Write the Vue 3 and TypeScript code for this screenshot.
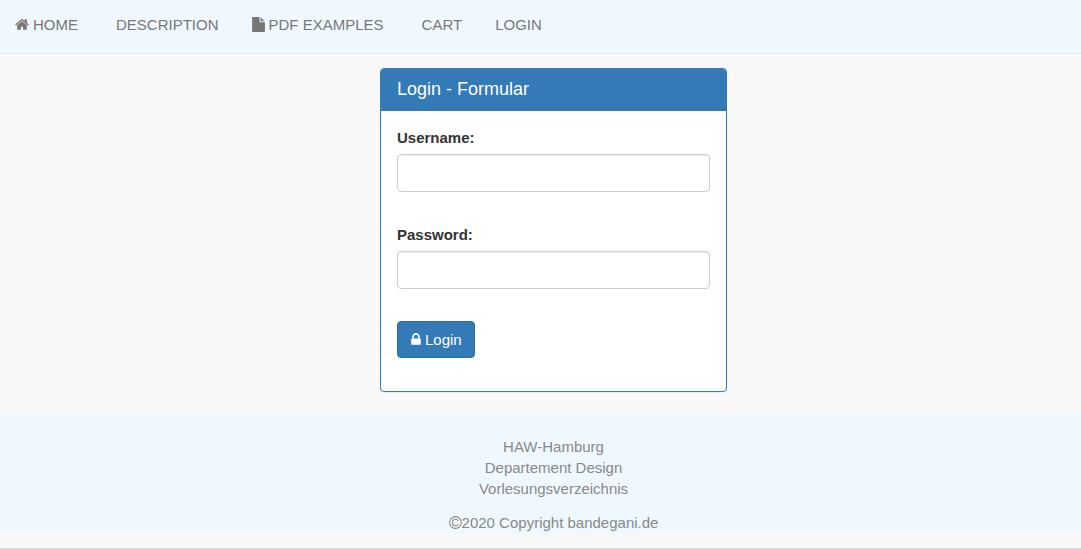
<script setup lang="ts">
import { ref } from 'vue'

interface NavItem {
  label: string
  icon?: 'home' | 'file'
}

const navItems: NavItem[] = [
  { label: 'HOME', icon: 'home' },
  { label: 'DESCRIPTION' },
  { label: 'PDF EXAMPLES', icon: 'file' },
  { label: 'CART' },
  { label: 'LOGIN' },
]

const footerLines: string[] = ['HAW-Hamburg', 'Departement Design', 'Vorlesungsverzeichnis']

const username = ref('')
const password = ref('')
</script>

<template>
  <div class="page">
    <nav class="navbar">
      <a v-for="item in navItems" :key="item.label" href="#" class="nav-link" :class="{ 'with-icon': item.icon }">
        <svg v-if="item.icon === 'home'" class="icon icon-home" viewBox="64 0 1664 1792" aria-hidden="true">
          <path d="M1472 992v480q0 26-19 45t-45 19h-384v-384h-256v384h-384q-26 0-45-19t-19-45v-480q0-1 .5-3t.5-3l575-474 575 474q1 2 1 6zm223-69l-62 74q-8 9-21 11h-3q-13 0-21-7l-692-577-692 577q-12 8-24 7-13-2-21-11l-62-74q-8-10-7-23.5t11-21.5l719-599q32-26 76-26t76 26l244 204v-195q0-14 9-23t23-9h192q14 0 23 9t9 23v408l219 182q10 8 11 21.5t-7 23.5z" />
        </svg>
        <svg v-if="item.icon === 'file'" class="icon icon-file" viewBox="128 0 1536 1792" aria-hidden="true">
          <path d="M1152 512v-472q22 14 36 28l408 408q14 14 28 36h-472zm-128 32q0 40 28 68t68 28h544v1056q0 40-28 68t-68 28h-1344q-40 0-68-28t-28-68v-1600q0-40 28-68t68-28h800v544z" />
        </svg>
        <span>{{ item.label }}</span>
      </a>
    </nav>

    <main class="content">
      <section class="panel">
        <header class="panel-heading">
          <h1>Login - Formular</h1>
        </header>
        <form class="panel-body" @submit.prevent>
          <div class="field">
            <label for="username">Username:</label>
            <input id="username" v-model="username" type="text" />
          </div>
          <div class="field">
            <label for="password">Password:</label>
            <input id="password" v-model="password" type="password" />
          </div>
          <button type="submit" class="button">
            <svg class="icon icon-lock" viewBox="320 0 1152 1792" aria-hidden="true">
              <path d="M640 768h512v-192q0-106-75-181t-181-75-181 75-75 181v192zm832 96v576q0 40-28 68t-68 28h-960q-40 0-68-28t-28-68v-576q0-40 28-68t68-28h32v-192q0-184 132-316t316-132 316 132 132 316v192h32q40 0 68 28t28 68z" />
            </svg>
            <span>Login</span>
          </button>
        </form>
      </section>
    </main>

    <footer class="footer">
      <p>
        <span v-for="line in footerLines" :key="line" class="line">{{ line }}</span>
      </p>
      <p class="copyright">
        <svg class="icon-copyright" viewBox="0 0 13 13" role="img" aria-label="Copyright">
          <circle cx="6.5" cy="6.5" r="5.9" />
          <path d="M9.3 4.9C8.8 3.8 7.8 3.2 6.6 3.2C4.7 3.2 3.5 4.6 3.5 6.5C3.5 8.4 4.7 9.8 6.6 9.8C7.9 9.8 8.9 9.1 9.4 7.9" />
        </svg>
        <span>2020 Copyright bandegani.de</span>
      </p>
    </footer>
    <hr class="rule" />
  </div>
</template>

<style>
body {
  margin: 0;
  background: #f8f8f8;
}
</style>

<style scoped>
.page {
  font-family: "Liberation Sans", Arial, sans-serif;
  font-size: 15px;
  line-height: 21px;
  color: #333;
}

.navbar {
  display: flex;
  flex-wrap: wrap;
  align-items: flex-start;
  gap: 0 33px;
  box-sizing: border-box;
  min-height: 54px;
  padding: 14px 15px 0;
  background: #f0f8ff;
  border-bottom: 1px solid #e7e7e7;
}

.nav-link {
  display: flex;
  align-items: center;
  gap: 4px;
  color: #777;
  text-decoration: none;
}

.nav-link.with-icon {
  margin-right: 5px;
}

.icon {
  display: block;
  flex: none;
  height: 15px;
  fill: currentColor;
}

.icon-home {
  width: 14px;
}

.icon-file {
  width: 13px;
}

.icon-lock {
  width: 10px;
}

.content {
  padding: 14px 0 22px 26px;
}

.panel {
  box-sizing: border-box;
  width: 100%;
  max-width: 347px;
  margin: 0 auto;
  overflow: hidden;
  background: #fff;
  border: 1px solid #337ab7;
  border-radius: 4px;
  box-shadow: 0 1px 1px rgba(0, 0, 0, 0.05);
}

.panel-heading {
  padding: 10px 16px 12px;
  color: #fff;
  background: #337ab7;
}

h1 {
  margin: 0;
  font-size: 18px;
  font-weight: 400;
  line-height: 20px;
}

.panel-body {
  padding: 16px 16px 33px;
}

.field {
  display: flex;
  flex-direction: column;
  gap: 5px;
  margin-bottom: 32px;
}

label {
  font-weight: 700;
  line-height: 22px;
}

input {
  box-sizing: border-box;
  width: 100%;
  height: 38px;
  padding: 6px 13px;
  font: inherit;
  color: #555;
  background: #fff;
  border: 1px solid #ccc;
  border-radius: 4px;
  box-shadow: inset 0 1px 1px rgba(0, 0, 0, 0.075);
}

.button {
  display: flex;
  align-items: center;
  gap: 4px;
  padding: 7px 12px 7px 13px;
  font: inherit;
  color: #fff;
  background: #337ab7;
  border: 1px solid #2e6da4;
  border-radius: 4px;
  cursor: pointer;
}

.footer {
  padding: 22px 0 1px 26px;
  color: #888;
  text-align: center;
  background: #f0f8ff;
}

.footer p {
  margin: 0 0 13px;
}

.line {
  display: block;
}

.footer .copyright {
  display: flex;
  align-items: center;
  justify-content: center;
  margin: 0;
}

.icon-copyright {
  width: 13px;
  height: 13px;
  fill: none;
  stroke: currentColor;
  stroke-width: 1.1;
}

.rule {
  margin: 14px 0 0;
  border: 0;
  border-top: 1px solid #ddd;
}
</style>
